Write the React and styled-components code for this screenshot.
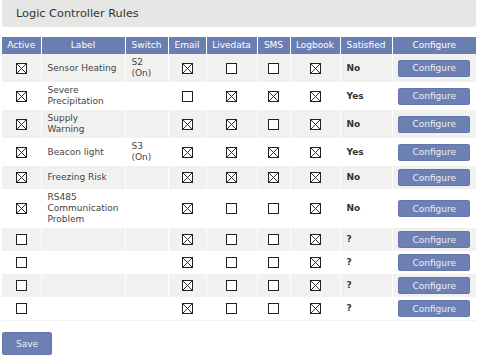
import styled, { createGlobalStyle } from 'styled-components'

const GlobalStyle = createGlobalStyle`
  body {
    margin: 0;
    background: #fff;
    font-family: "DejaVu Sans", Verdana, sans-serif;
    color: #444;
  }
`

const rules = [
  { active: true, label: 'Sensor Heating', sw: 'S2\n(On)', email: true, live: false, sms: false, log: true, sat: 'No' },
  { active: true, label: 'Severe\nPrecipitation', sw: '', email: false, live: true, sms: true, log: true, sat: 'Yes' },
  { active: true, label: 'Supply\nWarning', sw: '', email: true, live: true, sms: false, log: true, sat: 'No' },
  { active: true, label: 'Beacon light', sw: 'S3\n(On)', email: true, live: true, sms: true, log: true, sat: 'Yes' },
  { active: true, label: 'Freezing Risk', sw: '', email: true, live: true, sms: true, log: true, sat: 'No' },
  { active: true, label: 'RS485\nCommunication\nProblem', sw: '', email: true, live: false, sms: false, log: true, sat: 'No' },
  { active: false, label: '', sw: '', email: true, live: false, sms: false, log: true, sat: '?' },
  { active: false, label: '', sw: '', email: true, live: false, sms: false, log: true, sat: '?' },
  { active: false, label: '', sw: '', email: true, live: false, sms: false, log: true, sat: '?' },
  { active: false, label: '', sw: '', email: true, live: false, sms: false, log: true, sat: '?' },
]

const columns = [
  { title: 'Active', width: 39 },
  { title: 'Label', width: 84 },
  { title: 'Switch', width: 43 },
  { title: 'Email', width: 38 },
  { title: 'Livedata', width: 51 },
  { title: 'SMS', width: 33 },
  { title: 'Logbook', width: 50 },
  { title: 'Satisfied', width: 52 },
  { title: 'Configure', width: 84 },
]

const Check = ({ checked }) => (
  <CheckSvg width="11" height="11" viewBox="0 0 11 11">
    <rect x="0.5" y="0.5" width="10" height="10" fill="#fff" stroke="#222" />
    {checked && (
      <g stroke="#333" strokeWidth="1">
        <line x1="1" y1="1" x2="10" y2="10" />
        <line x1="10" y1="1" x2="1" y2="10" />
      </g>
    )}
  </CheckSvg>
)

const App = () => {
  return (
    <Page>
      <GlobalStyle />
      <TitleBar>Logic Controller Rules</TitleBar>

      <Table>
        <colgroup>
          {columns.map((c) => (
            <col key={c.title} style={{ width: c.width }} />
          ))}
        </colgroup>
        <thead>
          <tr>
            {columns.map((c) => (
              <Th key={c.title}>{c.title}</Th>
            ))}
          </tr>
        </thead>
        <tbody>
          {rules.map((r, i) => (
            <Row key={i} $odd={i % 2 === 0}>
              <Center><Check checked={r.active} /></Center>
              <Td>{r.label}</Td>
              <Td>{r.sw}</Td>
              <Center><Check checked={r.email} /></Center>
              <Center><Check checked={r.live} /></Center>
              <Center><Check checked={r.sms} /></Center>
              <Center><Check checked={r.log} /></Center>
              <Status>{r.sat}</Status>
              <Center><ConfigButton>Configure</ConfigButton></Center>
            </Row>
          ))}
        </tbody>
      </Table>

      <SaveButton>Save</SaveButton>
    </Page>
  )
}

export default App

const Page = styled.div`
  padding: 0 1px 0 2px;
  width: 474px;
`

const TitleBar = styled.div`
  height: 27px;
  background: #e6e7e5;
  border-radius: 0 0 3px 3px;
  display: flex;
  align-items: center;
  padding-left: 14px;
  font-size: 11.3px;
  color: #333;
  margin-bottom: 10px;
`

const Table = styled.table`
  width: 474px;
  table-layout: fixed;
  border-collapse: collapse;
  font-size: 9px;
  line-height: 11px;
  border-bottom: 1px solid #f2f3f1;
`

const Th = styled.th`
  background: #6b7eb1;
  color: #fff;
  font-weight: normal;
  height: 17px;
  padding: 0;
  text-align: center;
  border-left: 1px solid #fff;
  &:first-child {
    border-left: none;
  }
`

const Row = styled.tr`
  background: ${(p) => (p.$odd ? '#f1f2f0' : '#fff')};
`

const Td = styled.td`
  padding: 3px 6px;
  vertical-align: middle;
  white-space: pre-line;
  color: #444;
  border-left: 1px solid ${(p) => '#fff'};
  &:first-child {
    border-left: none;
  }
`

const Center = styled(Td)`
  text-align: center;
  padding: 3px 0;
`

const Status = styled(Td)`
  font-weight: bold;
  color: #333;
`

const CheckSvg = styled.svg`
  display: block;
  margin: 0 auto;
`

const ConfigButton = styled.button`
  display: block;
  margin: 0 auto;
  width: 72px;
  height: 17px;
  padding: 0;
  border: 1px solid #6377ac;
  border-radius: 2px;
  background: #6d80b3;
  color: #eceef5;
  font-family: "DejaVu Sans", Verdana, sans-serif;
  font-size: 9px;
`

const SaveButton = styled.button`
  display: block;
  margin-top: 11px;
  width: 50px;
  height: 23px;
  padding: 0;
  border: 1px solid #6377ac;
  border-radius: 2px;
  background: #6d80b3;
  color: #eceef5;
  font-family: "DejaVu Sans", Verdana, sans-serif;
  font-size: 9px;
`
